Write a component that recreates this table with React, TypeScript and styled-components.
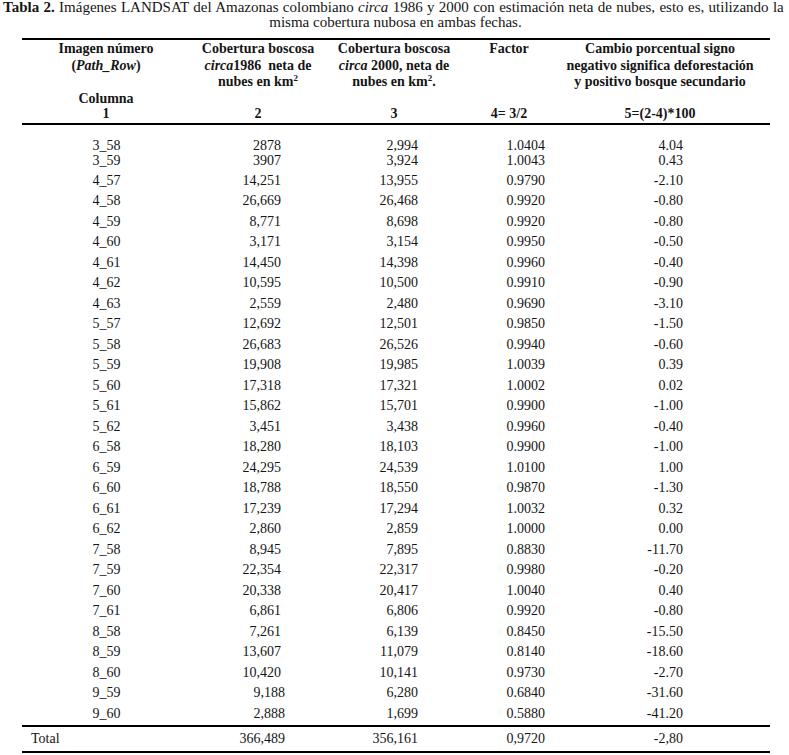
import React from "react";
import styled, { createGlobalStyle } from "styled-components";

const GlobalStyle = createGlobalStyle`
  html, body {
    margin: 0;
    padding: 0;
    background: #ffffff;
    overflow: hidden;
  }
  body {
    font-family: "Liberation Serif", "Times New Roman", serif;
    color: #151515;
  }
`;

const Page = styled.div`
  width: 789px;
  height: 755px;
  overflow: hidden;
  box-sizing: border-box;
`;

const Caption = styled.div`
  font-size: 15px;
  line-height: 15px;
`;

const CaptionLead = styled.div`
  white-space: nowrap;
  padding-left: 3px;
  word-spacing: 0.6px;
`;

const CaptionTail = styled.div`
  text-align: center;
  padding-left: 2px;
`;

const Table = styled.table`
  margin: 8px 0 0 22px;
  width: 748px;
  border-collapse: separate;
  border-spacing: 0;
  table-layout: fixed;
  font-size: 14px;
`;

const HeadCell = styled.th<{ $last?: boolean }>`
  font-weight: 700;
  text-align: center;
  white-space: nowrap;
  padding: ${(p) => (p.$last ? "0.5px 0 2px" : "1px 0 0")};
  line-height: ${(p) => (p.$last ? "15px" : "16.5px")};
  vertical-align: ${(p) => (p.$last ? "bottom" : "top")};
  border-top: ${(p) => (p.$last ? "none" : "2px solid #000")};
  border-bottom: ${(p) => (p.$last ? "2px solid #000" : "none")};
`;

const Sup = styled.sup`
  font-size: 9px;
  line-height: 0;
  vertical-align: 5px;
`;

type Gap = "top" | "tight" | "break" | "normal" | "end";

const Cell = styled.td<{ $gap: Gap; $pad: number; $align: "center" | "right" }>`
  text-align: ${(p) => p.$align};
  padding-right: ${(p) => p.$pad}px;
  white-space: nowrap;
  line-height: ${(p) => (p.$gap === "top" || p.$gap === "tight" ? "15px" : "20.5px")};
  padding-top: ${(p) => (p.$gap === "top" ? "12.5px" : p.$gap === "break" ? "3px" : "0")};
  padding-bottom: ${(p) => (p.$gap === "end" ? "1px" : "0")};
`;

const TotalCell = styled.td<{ $pad: number; $align: "left" | "right" }>`
  text-align: ${(p) => p.$align};
  padding-left: ${(p) => (p.$align === "left" ? "9px" : "0")};
  padding-right: ${(p) => p.$pad}px;
  line-height: 22px;
  border-top: 2px solid #000;
  border-bottom: 2px solid #000;
`;

const rows: [string, string, string, string, string][] = [
  ["3_58", "2878", "2,994", "1.0404", "4.04"],
  ["3_59", "3907", "3,924", "1.0043", "0.43"],
  ["4_57", "14,251", "13,955", "0.9790", "-2.10"],
  ["4_58", "26,669", "26,468", "0.9920", "-0.80"],
  ["4_59", "8,771", "8,698", "0.9920", "-0.80"],
  ["4_60", "3,171", "3,154", "0.9950", "-0.50"],
  ["4_61", "14,450", "14,398", "0.9960", "-0.40"],
  ["4_62", "10,595", "10,500", "0.9910", "-0.90"],
  ["4_63", "2,559", "2,480", "0.9690", "-3.10"],
  ["5_57", "12,692", "12,501", "0.9850", "-1.50"],
  ["5_58", "26,683", "26,526", "0.9940", "-0.60"],
  ["5_59", "19,908", "19,985", "1.0039", "0.39"],
  ["5_60", "17,318", "17,321", "1.0002", "0.02"],
  ["5_61", "15,862", "15,701", "0.9900", "-1.00"],
  ["5_62", "3,451", "3,438", "0.9960", "-0.40"],
  ["6_58", "18,280", "18,103", "0.9900", "-1.00"],
  ["6_59", "24,295", "24,539", "1.0100", "1.00"],
  ["6_60", "18,788", "18,550", "0.9870", "-1.30"],
  ["6_61", "17,239", "17,294", "1.0032", "0.32"],
  ["6_62", "2,860", "2,859", "1.0000", "0.00"],
  ["7_58", "8,945", "7,895", "0.8830", "-11.70"],
  ["7_59", "22,354", "22,317", "0.9980", "-0.20"],
  ["7_60", "20,338", "20,417", "1.0040", "0.40"],
  ["7_61", "6,861", "6,806", "0.9920", "-0.80"],
  ["8_58", "7,261", "6,139", "0.8450", "-15.50"],
  ["8_59", "13,607", "11,079", "0.8140", "-18.60"],
  ["8_60", "10,420", "10,141", "0.9730", "-2.70"],
  ["9_59", "9,188", "6,280", "0.6840", "-31.60"],
  ["9_60", "2,888", "1,699", "0.5880", "-41.20"],
];

// the last two rows of column 2 sit a few px further right in the scan
const nudged = new Set(["9_59", "9_60"]);

const gapFor = (i: number): Gap => {
  if (i === 0) return "top";
  if (i === 1) return "tight";
  if (i === 2) return "break";
  if (i === rows.length - 1) return "end";
  return "normal";
};

const App = () => {
  return (
    <Page>
      <GlobalStyle />
      <Caption>
        <CaptionLead>
          <b>Tabla 2.</b> Imágenes LANDSAT del Amazonas colombiano <i>circa</i> 1986 y 2000 con
          estimación neta de nubes, esto es, utilizando la
        </CaptionLead>
        <CaptionTail>misma cobertura nubosa en ambas fechas.</CaptionTail>
      </Caption>
      <Table>
        <colgroup>
          <col style={{ width: 168 }} />
          <col style={{ width: 136 }} />
          <col style={{ width: 136 }} />
          <col style={{ width: 94 }} />
          <col style={{ width: 214 }} />
        </colgroup>
        <thead>
          <tr>
            <HeadCell>
              Imagen número
              <br />(<i>Path_Row</i>)
            </HeadCell>
            <HeadCell>
              Cobertura boscosa
              <br />
              <i>circa</i>1986&nbsp; neta de
              <br />
              nubes en km<Sup>2</Sup>
            </HeadCell>
            <HeadCell>
              Cobertura boscosa
              <br />
              <i>circa</i> 2000, neta de
              <br />
              nubes en km<Sup>2</Sup>.
            </HeadCell>
            <HeadCell>Factor</HeadCell>
            <HeadCell style={{ paddingRight: 6 }}>
              Cambio porcentual signo
              <br />
              negativo significa deforestación
              <br />y positivo bosque secundario
            </HeadCell>
          </tr>
          <tr>
            <HeadCell $last>
              Columna
              <br />1
            </HeadCell>
            <HeadCell $last>2</HeadCell>
            <HeadCell $last>3</HeadCell>
            <HeadCell $last>4= 3/2</HeadCell>
            <HeadCell $last style={{ paddingRight: 6 }}>
              5=(2-4)*100
            </HeadCell>
          </tr>
        </thead>
        <tbody>
          {rows.map((r, i) => {
            const gap = gapFor(i);
            return (
              <tr key={r[0]}>
                <Cell $gap={gap} $pad={0} $align="center">
                  {r[0]}
                </Cell>
                <Cell $gap={gap} $pad={nudged.has(r[0]) ? 41 : 45} $align="right">
                  {r[1]}
                </Cell>
                <Cell $gap={gap} $pad={44} $align="right">
                  {r[2]}
                </Cell>
                <Cell $gap={gap} $pad={11} $align="right">
                  {r[3]}
                </Cell>
                <Cell $gap={gap} $pad={87} $align="right">
                  {r[4]}
                </Cell>
              </tr>
            );
          })}
          <tr>
            <TotalCell $pad={0} $align="left">
              Total
            </TotalCell>
            <TotalCell $pad={41} $align="right">
              366,489
            </TotalCell>
            <TotalCell $pad={44} $align="right">
              356,161
            </TotalCell>
            <TotalCell $pad={11} $align="right">
              0,9720
            </TotalCell>
            <TotalCell $pad={87} $align="right">
              -2,80
            </TotalCell>
          </tr>
        </tbody>
      </Table>
    </Page>
  );
};

export default App;
